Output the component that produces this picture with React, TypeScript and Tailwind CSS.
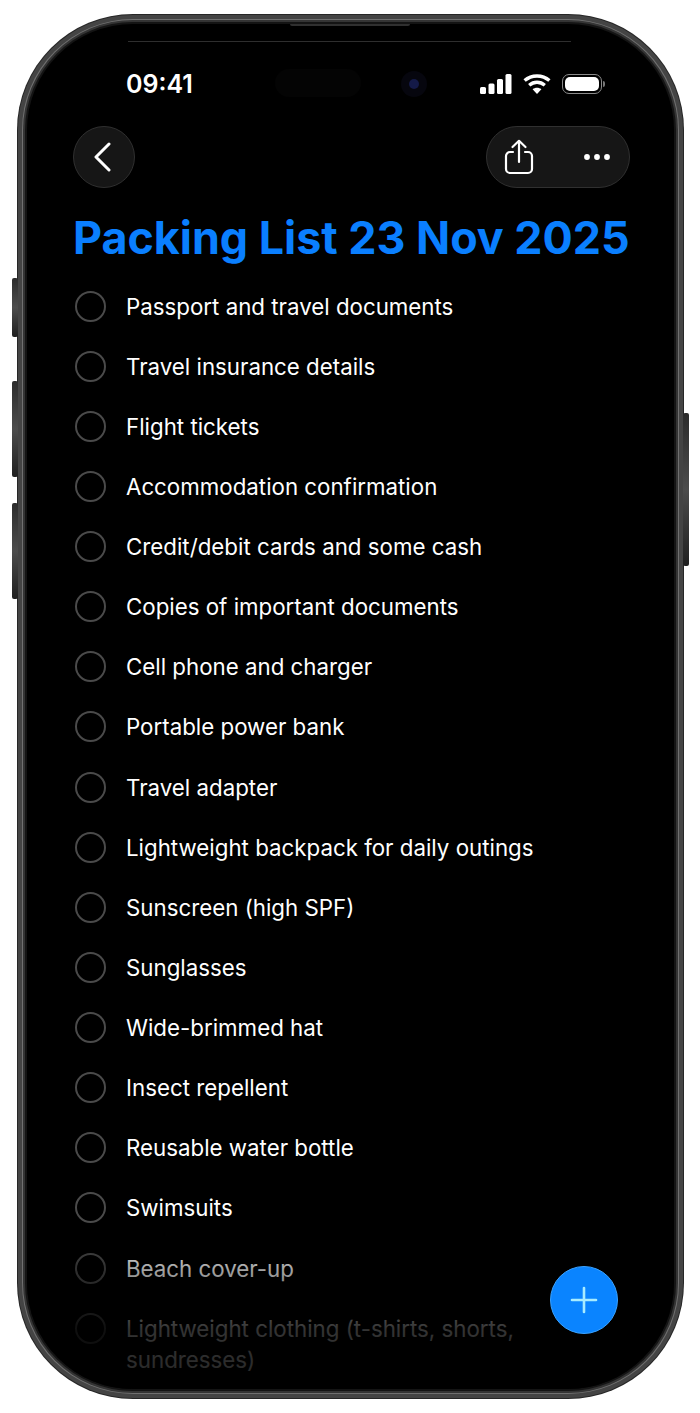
const items = [
  "Passport and travel documents",
  "Travel insurance details",
  "Flight tickets",
  "Accommodation confirmation",
  "Credit/debit cards and some cash",
  "Copies of important documents",
  "Cell phone and charger",
  "Portable power bank",
  "Travel adapter",
  "Lightweight backpack for daily outings",
  "Sunscreen (high SPF)",
  "Sunglasses",
  "Wide-brimmed hat",
  "Insect repellent",
  "Reusable water bottle",
  "Swimsuits",
  "Beach cover-up",
  "Lightweight clothing (t-shirts, shorts, sundresses)",
];

const sideButton =
  "absolute w-[6px] rounded-[2px] bg-gradient-to-b from-[#2c2c2c] via-[#4c4c4c] to-[#202020]";

function StatusIcons() {
  return (
    <div className="flex items-center gap-[11px]">
      <svg width="32" height="20" viewBox="0 0 32 20" fill="#fff">
        <rect x="0" y="13" width="6" height="7" rx="1.5" />
        <rect x="8.5" y="9.5" width="6" height="10.5" rx="1.5" />
        <rect x="17" y="5" width="6" height="15" rx="1.5" />
        <rect x="25.5" y="0" width="6" height="20" rx="1.5" />
      </svg>
      <svg width="28" height="20" viewBox="0 0 28 20" fill="none" stroke="#fff" strokeWidth="3.4">
        <path d="M1.6 6.6C8.6 0.4 19.4 0.4 26.4 6.6" />
        <path d="M6.2 11.2C10.8 7.2 17.2 7.2 21.8 11.2" />
        <path d="M14 20L9.6 15.2C12.2 13.2 15.8 13.2 18.4 15.2Z" fill="#fff" stroke="none" />
      </svg>
      <div className="flex items-center gap-[1px]">
        <div className="h-[20px] w-[40px] rounded-[7px] border border-[#8a8a8a] p-[2px]">
          <div className="h-full w-full rounded-[5px] bg-white" />
        </div>
        <div className="h-[6px] w-[2px] rounded-r-full bg-[#777777]" />
      </div>
    </div>
  );
}

function ShareIcon() {
  return (
    <svg width="30" height="36" viewBox="0 0 30 36" fill="none" stroke="#fff" strokeWidth="2.2" strokeLinecap="round" strokeLinejoin="round">
      <path d="M9 13H6a4 4 0 0 0-4 4v13a4 4 0 0 0 4 4h18a4 4 0 0 0 4-4V17a4 4 0 0 0-4-4h-3" />
      <path d="M15 23V2" />
      <path d="M8.5 8L15 1.8L21.5 8" />
    </svg>
  );
}

export default function App() {
  return (
    <div className="h-[1413px] w-[700px] overflow-hidden bg-white pl-[17px] pt-[14px] font-['Inter',sans-serif]">
      <div className="relative h-[1385px] w-[667px] rounded-[116px] bg-[#262626] p-px">
        {/* hardware buttons */}
        <div className={`${sideButton} left-[-5px] top-[264px] h-[59px]`} />
        <div className={`${sideButton} left-[-5px] top-[367px] h-[96px]`} />
        <div className={`${sideButton} left-[-5px] top-[489px] h-[96px]`} />
        <div className={`${sideButton} right-[-5px] top-[399px] h-[153px]`} />

        <div className="h-full w-full rounded-[115px] bg-[#444444] p-[4px]">
          <div className="h-full w-full rounded-[111px] bg-[#707070] p-px">
            <div className="h-full w-full rounded-[110px] bg-[#343434] p-[2px]">
              <div className="h-full w-full rounded-[108px] bg-[#141414] p-[2px]">
                <div className="relative flex h-full w-full flex-col overflow-hidden rounded-[106px] bg-black">
                  {/* speaker slit, hairline and sensor housing */}
                  <div className="absolute left-[263px] top-0 h-[2px] w-[120px] rounded-b-[2px] bg-[#303030]" />
                  <div className="absolute left-[101px] right-[103px] top-[17px] h-px bg-[#2e2e2e]" />
                  <div className="absolute left-[248px] top-[45px] h-[28px] w-[86px] rounded-full bg-[#040404]" />
                  <div className="absolute left-[374px] top-[47px] flex h-[26px] w-[26px] items-center justify-center rounded-full bg-[#06060e]">
                    <div className="h-[10px] w-[10px] rounded-full bg-[#141a48]" />
                  </div>

                  <div className="ml-[99px] mr-[69px] mt-[40px] flex h-[40px] shrink-0 items-center justify-between">
                    <span className="text-[25px] font-semibold leading-none text-white">09:41</span>
                    <StatusIcons />
                  </div>

                  <div className="ml-[46px] mr-[44px] mt-[22px] flex shrink-0 items-center justify-between">
                    <button className="flex h-[62px] w-[62px] items-center justify-center rounded-full border border-[#303030] bg-[#161616] pr-[3px]">
                      <svg width="20" height="30" viewBox="0 0 20 30" fill="none" stroke="#fff" strokeWidth="3" strokeLinecap="round" strokeLinejoin="round">
                        <path d="M16 2L3 15L16 28" />
                      </svg>
                    </button>
                    <div className="flex h-[62px] w-[144px] items-center justify-between rounded-full border border-[#303030] bg-[#161616] pl-[17px] pr-[19px]">
                      <ShareIcon />
                      <svg width="26" height="8" viewBox="0 0 26 8" fill="#fff">
                        <circle cx="3" cy="4" r="2.9" />
                        <circle cx="13" cy="4" r="2.9" />
                        <circle cx="23" cy="4" r="2.9" />
                      </svg>
                    </div>
                  </div>

                  <h1 className="ml-[46px] mt-[22px] shrink-0 whitespace-nowrap text-[44.8px] font-bold leading-[56px] text-[#0a7fff]">
                    Packing List 23 Nov 2025
                  </h1>

                  <ul className="ml-[48px] mr-[100px] mt-[10px]">
                    {items.map((item) => (
                      <li key={item} className="flex items-start gap-[20px] py-[14.57px]">
                        <span className="h-[31px] w-[31px] shrink-0 rounded-full border-2 border-[#4a4a4a]" />
                        <span className="text-[22.3px] leading-[31px] text-white">{item}</span>
                      </li>
                    ))}
                  </ul>

                  {/* list fades out towards the bottom edge */}
                  <div className="absolute bottom-0 left-0 right-0 h-[170px] bg-[linear-gradient(to_bottom,transparent_8%,rgba(0,0,0,0.35)_29%,rgba(0,0,0,0.8)_65%,rgba(0,0,0,0.85)_100%)]" />

                  <button className="absolute left-[523px] top-[1242px] flex h-[68px] w-[68px] items-center justify-center rounded-full border border-[#3aa2ff] bg-[#0a84ff]">
                    <svg width="28" height="28" viewBox="0 0 28 28" fill="none" stroke="#a8ecff" strokeWidth="2.6" strokeLinecap="round">
                      <path d="M14 2V26" />
                      <path d="M2 14H26" />
                    </svg>
                  </button>
                </div>
              </div>
            </div>
          </div>
        </div>
      </div>
    </div>
  );
}
